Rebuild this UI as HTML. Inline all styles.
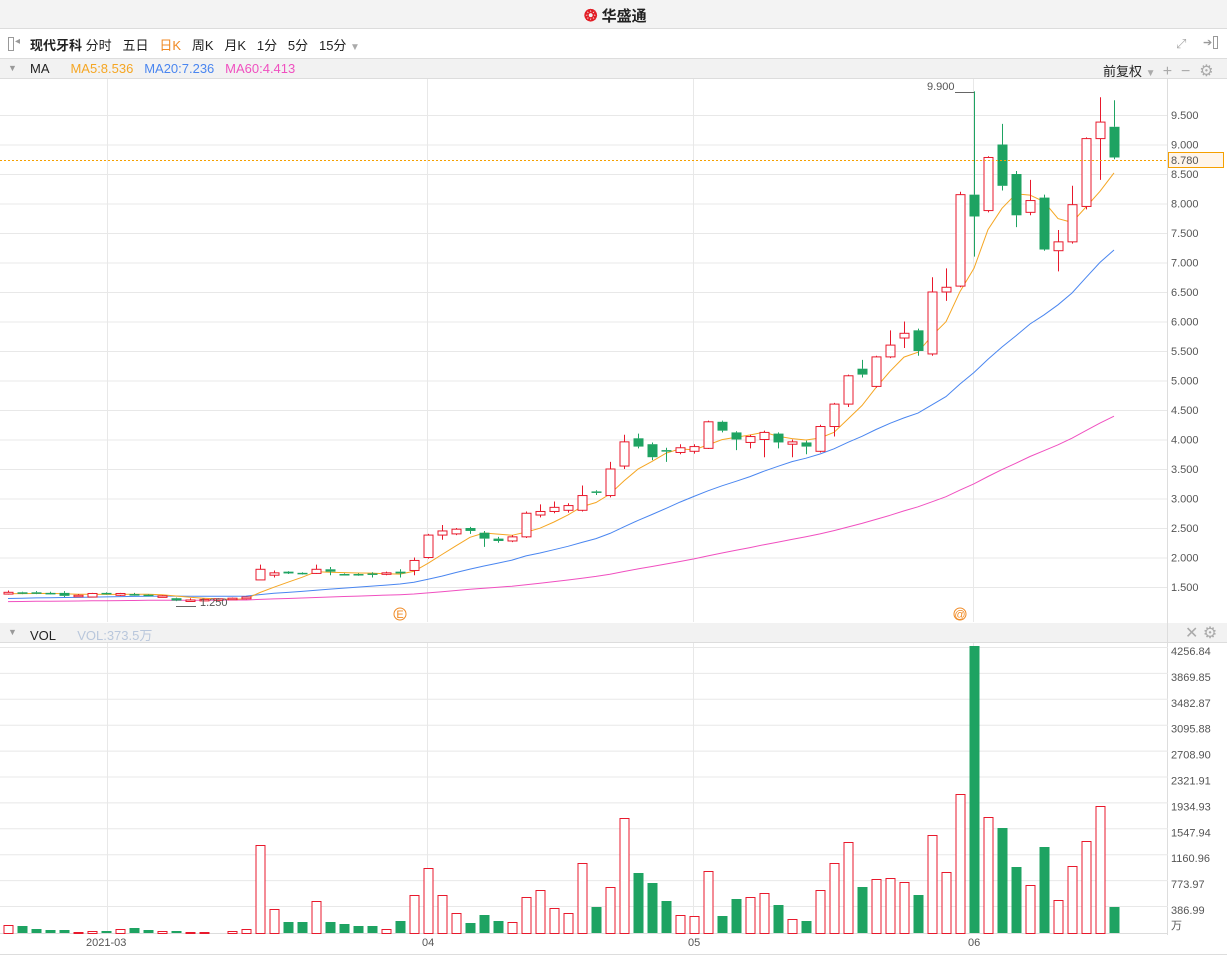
<!DOCTYPE html>
<html><head><meta charset="utf-8"><style>
body{margin:0;width:1227px;height:955px;overflow:hidden;background:#fff;font-family:"Liberation Sans","Noto Sans CJK SC",sans-serif;position:relative}
.a{position:absolute}
</style></head><body>
<div class="a" style="left:0;top:0;width:1227px;height:28px;background:#f3f3f3;border-bottom:1px solid #dcdcdc"></div>
<div class="a" style="left:584px;top:5px;font-size:15px;font-weight:bold;color:#222;"><span style="color:#e21e26;font-size:16px">&#x2742;</span> 华盛通</div>
<div class="a" style="left:0;top:29px;width:1227px;height:29px;background:#fff;border-bottom:1px solid #ddd"></div>
<div class="a" style="left:8px;top:37px;width:4px;height:12px;border:1px solid #999;"></div>
<div class="a" style="left:15px;top:36px;font-size:10px;color:#999">◂</div>
<div class="a" style="left:30px;top:35px;font-size:13px;color:#222;white-space:pre"><b>现代牙科</b> 分时   五日   <span style="color:#f08a24">日K</span>   周K   月K   1分   5分   15分 <span style="color:#aaa;font-size:10px">▼</span></div>
<div class="a" style="left:1176px;top:36px;font-size:13px;color:#aaa">⤢</div>
<div class="a" style="left:1203px;top:36px;font-size:11px;color:#999">➔</div>
<div class="a" style="left:1213px;top:36px;width:5px;height:13px;border:1px solid #999;box-sizing:border-box"></div>
<div class="a" style="left:0;top:59px;width:1227px;height:19px;background:#f2f2f2;border-bottom:1px solid #ddd"></div>
<div class="a" style="left:8px;top:63px;font-size:9px;color:#999">▼</div>
<div class="a" style="left:30px;top:61px;font-size:13px;color:#222;white-space:pre">MA      <span style="color:#f5a623">MA5:8.536</span>   <span style="color:#4a86f0">MA20:7.236</span>   <span style="color:#f050c0">MA60:4.413</span></div>
<div class="a" style="left:1103px;top:61px;font-size:13px;color:#222;white-space:pre">前复权 <span style="color:#aaa;font-size:10px">▼</span>  <span style="color:#aaa;font-size:16px">+ &nbsp;− &nbsp;⚙</span></div>
<div class="a" style="left:0;top:623px;width:1227px;height:19px;background:#f2f2f2;border-bottom:1px solid #ddd"></div>
<div class="a" style="left:8px;top:627px;font-size:9px;color:#999">▼</div>
<div class="a" style="left:30px;top:625px;font-size:13px;color:#222;white-space:pre">VOL      <span style="color:#b9c7dc">VOL:373.5万</span></div>
<div class="a" style="left:1185px;top:623px;font-size:16px;color:#aaa;white-space:pre">✕ ⚙</div>
<svg id="s" class="a" style="left:0;top:0" width="1227" height="955" font-family="Liberation Sans" font-size="11"></svg>
<script>
var S='';
function L(x1,y1,x2,y2,c,w,d){S+='<line x1="'+x1+'" y1="'+y1+'" x2="'+x2+'" y2="'+y2+'" stroke="'+c+'" stroke-width="'+(w||1)+'"'+(d?' stroke-dasharray="'+d+'"':'')+'/>';}
function T(x,y,t,c,a){S+='<text x="'+x+'" y="'+y+'" fill="'+(c||'#555')+'"'+(a?' text-anchor="'+a+'"':'')+'>'+t+'</text>';}
function Y(p){return 115+(9.5-p)*59;}
for(var p=1.5;p<=9.5;p+=0.5){var y=Y(p);L(0,y+.5,1168,y+.5,'#e8e8e8');T(1171,y+4,p.toFixed(3));}
[107,427,693,973].forEach(function(x){L(x+.5,79,x+.5,622,'#e8e8e8');L(x+.5,643,x+.5,933,'#e8e8e8');});
L(1167.5,79,1167.5,935,'#ddd');
var vl=['4256.84','3869.85','3482.87','3095.88','2708.90','2321.91','1934.93','1547.94','1160.96','773.97','386.99'];
for(var i=0;i<11;i++){var y=647+i*25.9;L(0,y+.5,1168,y+.5,'#e8e8e8');T(1171,y+8,vl[i]);}
T(1171,929,'万');
L(0,933.5,1168,933.5,'#ddd');L(0,954.5,1227,954.5,'#ddd');
T(86,946,'2021-03');T(422,946,'04');T(688,946,'05');T(968,946,'06');
var C=[[1.38,1.41,1.44,1.37],[1.41,1.39,1.42,1.38],[1.41,1.39,1.43,1.38],[1.40,1.39,1.42,1.38],[1.40,1.35,1.43,1.33],[1.36,1.36,1.38,1.34],[1.33,1.39,1.40,1.33],[1.40,1.38,1.41,1.37],[1.36,1.39,1.40,1.35],[1.38,1.37,1.40,1.36],
[1.37,1.36,1.38,1.35],[1.35,1.35,1.36,1.34],[1.31,1.27,1.32,1.26],[1.26,1.28,1.31,1.25],[1.28,1.29,1.30,1.27],[1.30,1.30,1.31,1.29],[1.31,1.31,1.32,1.30],[1.30,1.33,1.34,1.29],[1.62,1.80,1.88,1.62],[1.70,1.74,1.78,1.66],
[1.76,1.73,1.77,1.72],[1.74,1.72,1.75,1.71],[1.73,1.80,1.88,1.72],[1.80,1.76,1.84,1.70],[1.72,1.71,1.73,1.70],[1.72,1.70,1.73,1.69],[1.73,1.71,1.75,1.66],[1.72,1.74,1.76,1.70],[1.76,1.73,1.80,1.66],[1.78,1.95,2.00,1.70],
[2.00,2.38,2.40,1.98],[2.38,2.45,2.55,2.30],[2.40,2.48,2.50,2.38],[2.50,2.45,2.52,2.40],[2.42,2.32,2.45,2.18],[2.32,2.28,2.35,2.25],[2.28,2.35,2.38,2.26],[2.35,2.75,2.78,2.33],[2.72,2.78,2.90,2.68],[2.78,2.85,2.95,2.75],
[2.80,2.88,2.92,2.76],[2.80,3.05,3.22,2.78],[3.12,3.10,3.14,3.06],[3.05,3.50,3.62,3.02],[3.55,3.96,4.08,3.50],[4.02,3.88,4.10,3.85],[3.92,3.70,3.95,3.65],[3.82,3.80,3.86,3.62],[3.78,3.86,3.92,3.75],[3.80,3.88,3.92,3.76],
[3.85,4.30,4.32,3.84],[4.30,4.15,4.32,4.12],[4.12,4.00,4.14,3.82],[3.95,4.05,4.08,3.85],[4.00,4.12,4.15,3.70],[4.10,3.95,4.12,3.85],[3.92,3.96,4.00,3.70],[3.95,3.88,3.98,3.75],[3.80,4.22,4.25,3.78],[4.22,4.60,4.62,4.05],
[4.60,5.08,5.10,4.55],[5.20,5.10,5.35,5.05],[4.90,5.40,5.42,4.88],[5.40,5.60,5.85,5.38],[5.72,5.80,6.00,5.55],[5.85,5.50,5.88,5.42],[5.45,6.50,6.75,5.42],[6.50,6.58,6.90,6.35],[6.60,8.15,8.20,6.58],[8.15,7.78,9.90,7.10],
[7.88,8.78,8.80,7.85],[9.00,8.30,9.35,8.22],[8.50,7.80,8.55,7.60],[7.85,8.05,8.40,7.80],[8.10,7.22,8.15,7.20],[7.20,7.35,7.55,6.85],[7.35,7.98,8.30,7.32],[7.95,9.10,9.12,7.90],[9.10,9.38,9.80,8.40],[9.30,8.78,9.75,8.75]];
var n=C.length;
function X(i){return 8+i*14;}
var R='#e8192c',G='#1ea362';
function ma(k,col,pad){var pts=[];for(var i=0;i<n;i++){var s=0;for(var j=i-k+1;j<=i;j++)s+=(j<0?pad:C[j][1]);pts.push(X(i).toFixed(1)+','+Y(s/k).toFixed(1));}
S+='<polyline points="'+pts.join(' ')+'" fill="none" stroke="'+col+'" stroke-width="1"/>';}
ma(60,'#f050c0',1.25);ma(20,'#4a86f0',1.3);ma(5,'#f5a623',1.38);
for(var i=0;i<n;i++){var c=C[i],x=X(i)+.5,up=c[1]>=c[0],col=up?R:G,t=Y(Math.max(c[0],c[1])),b=Y(Math.min(c[0],c[1]));if(b-t<1.5)b=t+1.5;
L(x,Y(c[2]),x,t,col);L(x,b,x,Y(c[3]),col);
if(up)S+='<rect x="'+(x-4.5)+'" y="'+t+'" width="9" height="'+(b-t)+'" fill="#fff" stroke="'+col+'"/>';
else S+='<rect x="'+(x-5)+'" y="'+t+'" width="10" height="'+(b-t)+'" fill="'+col+'"/>';}
L(955,92.5,974,92.5,'#666');T(927,90,'9.900');
T(200,606,'1.250','#555');L(176,606.5,196,606.5,'#666');
L(0,160.5,1168,160.5,'#f5a000',1,'2,2');
S+='<rect x="1168.5" y="152.5" width="55" height="15" fill="#fff5ea" stroke="#f5a000"/>';T(1171,164,'8.780');
S+='<circle cx="400" cy="614" r="6" fill="none" stroke="#f08a24"/>';T(400,618,'E','#f08a24','middle');
S+='<circle cx="960" cy="614" r="6" fill="none" stroke="#f08a24"/>';T(960,618,'@','#f08a24','middle');
var V=[8,7,4,3,3,1,2,2,4,5,3,2,2,1,1,0,2,4,88,24,11,11,32,11,9,7,7,4,12,38,65,38,20,10,18,12,11,36,43,25,20,70,26,46,115,60,50,32,18,17,62,17,34,36,40,28,14,12,43,70,91,46,54,55,51,38,98,61,139,287,116,105,66,48,86,33,67,92,127,26];
for(var i=0;i<V.length&&i<n;i++){var x=X(i)+.5,h=V[i];if(!h)continue;var up=C[i][1]>=C[i][0];
if(!up)S+='<rect x="'+(x-5)+'" y="'+(933-h)+'" width="10" height="'+h+'" fill="'+G+'"/>';
else S+='<rect x="'+(x-4.5)+'" y="'+(933.5-h)+'" width="9" height="'+h+'" fill="#fff" stroke="'+R+'"/>';}
document.getElementById('s').innerHTML=S;
</script>
</body></html>
